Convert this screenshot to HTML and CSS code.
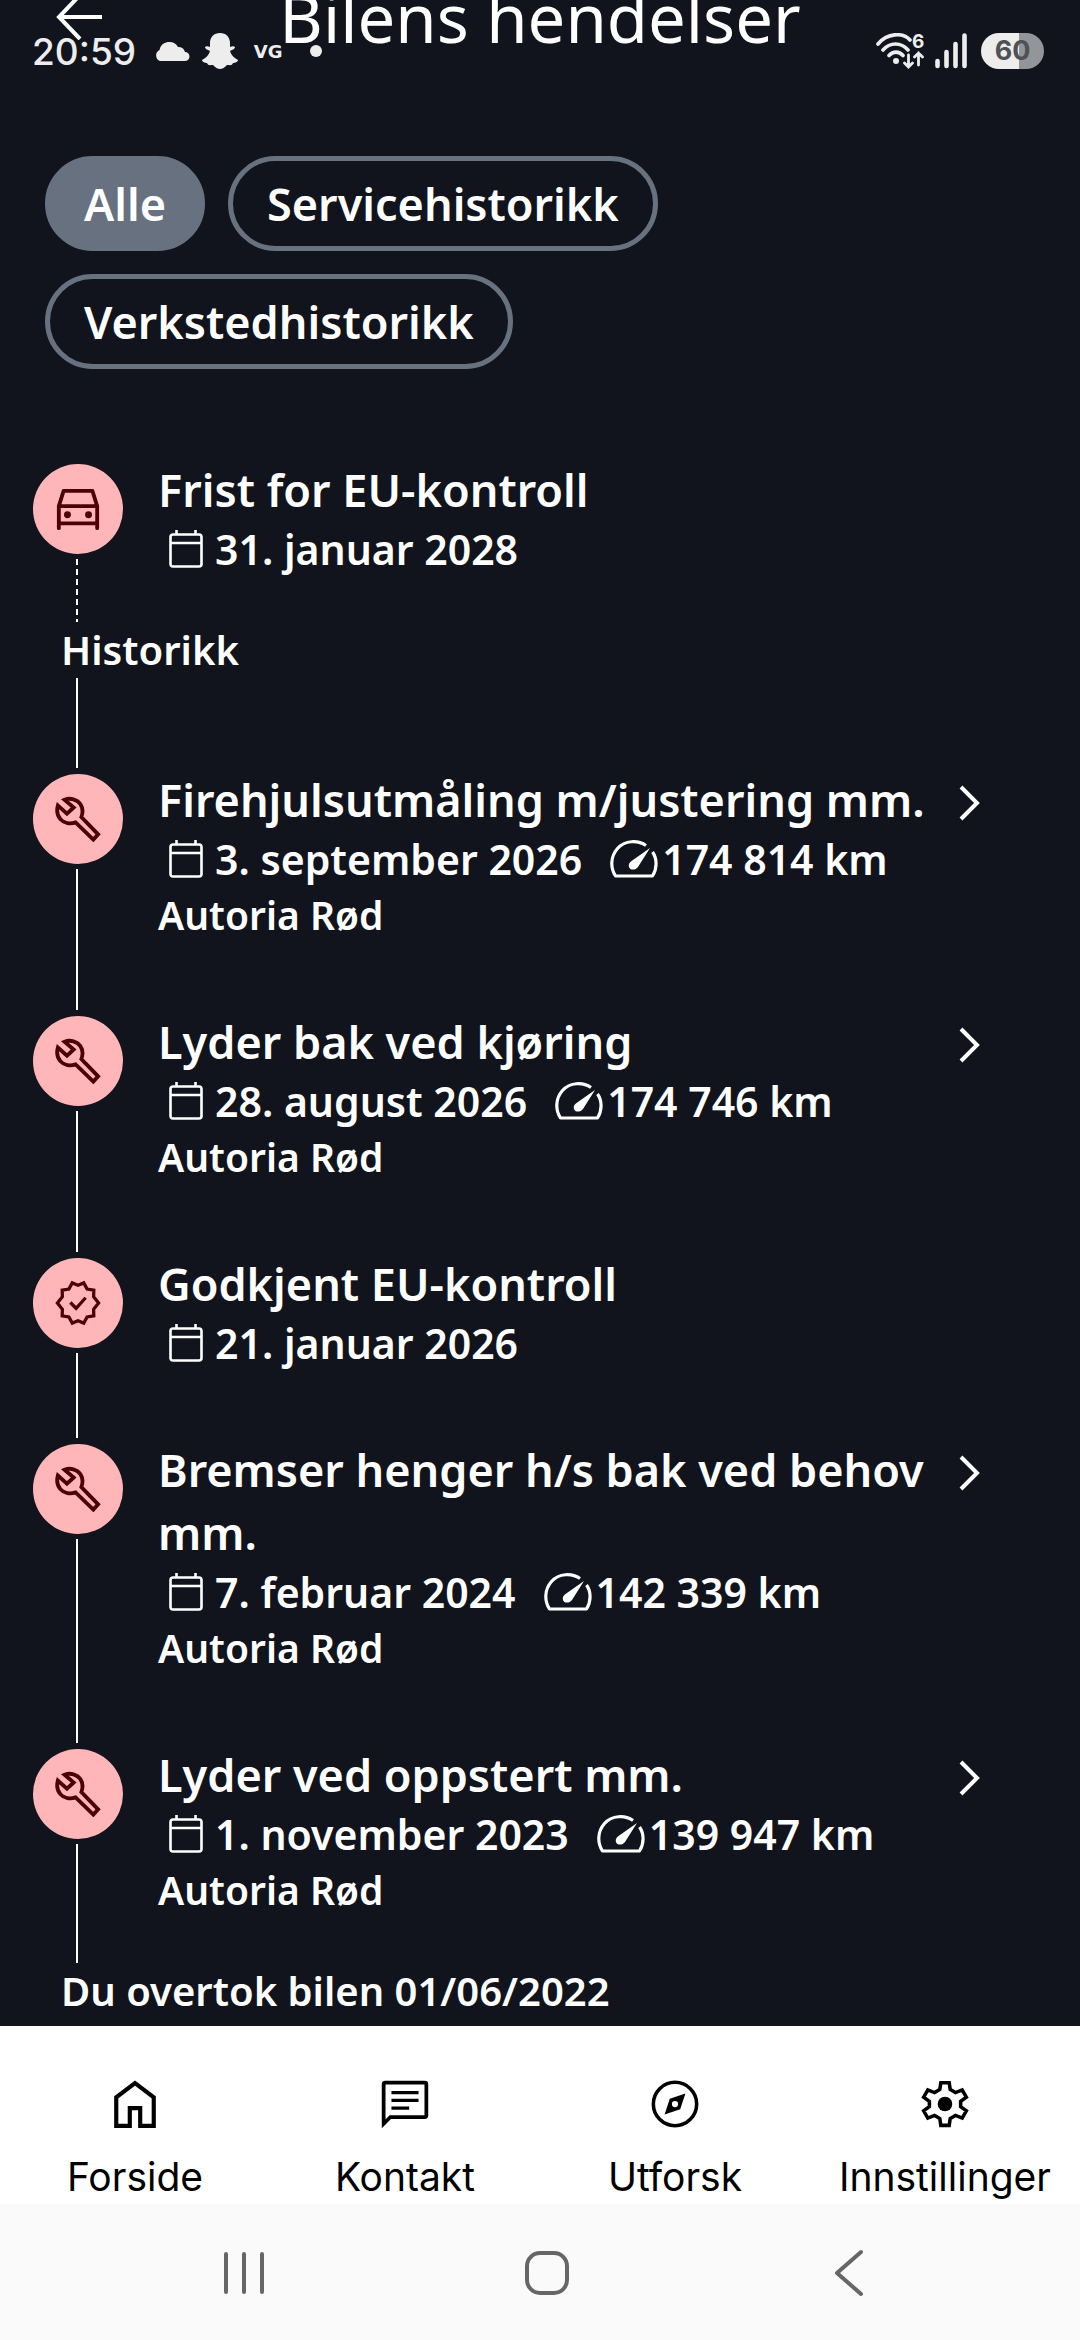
FILE: index.html
```html
<!DOCTYPE html>
<html lang="no">
<head>
  <meta charset="UTF-8">
  <meta name="viewport" content="width=device-width, initial-scale=1.0">
  <title>Bilens hendelser</title>
  <link rel="stylesheet" href="styles.css">
</head>
<body>

  <!-- shared icons -->
  <svg class="sprite" aria-hidden="true">
    <symbol id="i-car" viewBox="0 0 48 48">
      <g fill="none" stroke="currentColor" stroke-width="4" stroke-linejoin="round" stroke-linecap="round">
        <path d="M4 44V21L9 5H39L44 21V44M4 21H44M4 39H44"/>
      </g>
      <circle cx="13" cy="30" r="3.6" fill="currentColor"/>
      <circle cx="35" cy="30" r="3.6" fill="currentColor"/>
    </symbol>
    <symbol id="i-wrench" viewBox="0 0 48 48">
      <path d="M10 4C16 1.500 23 3.500 26.500 8.500C29.500 13 29 18 27.500 22L45 40L40 45.500L21.500 27.500C16 29.500 9.500 28.500 5.500 24C2 20 1.500 15.500 3 10L12.500 18.500L19.500 12Z" fill="none" stroke="currentColor" stroke-width="4"/>
    </symbol>
    <symbol id="i-badge" viewBox="0 0 48 48">
      <path d="M24 5.500L30 3L33.500 9.500L40.500 10.500L40.300 17.500L45.500 24L40.300 30.500L40.500 37.500L33.500 38.500L30 45L24 42.500L18 45L14.500 38.500L7.500 37.500L7.700 30.500L2.500 24L7.700 17.500L7.500 10.500L14.500 9.500L18 3Z" fill="none" stroke="currentColor" stroke-width="3.400"/>
      <path d="M16 23.500L22 29.500L32 18.500" fill="none" stroke="currentColor" stroke-width="3.400"/>
    </symbol>
    <symbol id="i-cal" viewBox="0 0 34 38">
      <path d="M4 4.500H30Q32.500 4.500 32.500 7V34Q32.500 36.500 30 36.500H4Q1.500 36.500 1.500 34V7Q1.500 4.500 4 4.500ZM1.500 13H32.500M7.500 0V5M26.500 0V5" fill="none" stroke="currentColor" stroke-width="2.600"/>
    </symbol>
    <symbol id="i-gauge" viewBox="0 0 48 38">
      <path d="M36 5.500C28 0 15 0 7.500 8.500C0 17 0.500 28 5.500 36H42.500C47 29 47.500 19 42.500 12" fill="none" stroke="currentColor" stroke-width="3.200" stroke-linejoin="round"/>
      <path d="M40 8L28 27C26 30 21 30.500 19.500 28C18 25.500 19 22.500 21.500 21Z" fill="currentColor"/>
    </symbol>
    <symbol id="i-next" viewBox="0 0 24 36">
      <path d="M3 2L19 18L3 34" fill="none" stroke="currentColor" stroke-width="4"/>
    </symbol>
  </svg>

  <div class="status-bar">
    <div class="status-left">
      <span class="clock">20:59</span>
      <svg class="cloud" viewBox="0 0 36 20"><path d="M6 20A6 6 0 0 1 5.500 9A10 10 0 0 1 24 6A7 7 0 0 1 31 11A4.500 4.500 0 0 1 31 20Z" fill="currentColor"/></svg>
      <svg class="snap" viewBox="0 0 36 36"><path d="M18 0C24 0 28 4 28 10V14C30 13 32 13 33 14C33 16 30 17 28 18C29 22 32 25 36 27C36 29 33 30 31 30C30 33 28 32 25 32C22 35 20 36 18 36S14 35 11 32C8 32 6 33 5 30C3 30 0 29 0 27C4 25 7 22 8 18C6 17 3 16 3 14C4 13 6 13 8 14V10C8 4 12 0 18 0Z" fill="currentColor"/></svg>
      <span class="vg">VG</span>
      <span class="dot"></span>
    </div>
    <div class="status-right">
      <svg class="wifi" viewBox="0 0 48 36">
        <g fill="none" stroke="currentColor" stroke-width="3.600" stroke-linecap="round">
          <path d="M2 11C11 0 27 -1 34 7M7 17C14 9 25 9 32 17M13 22.500C17 18 23 18 27 22.500"/>
          <path d="M32.500 22V33M28.500 30L32.500 34L36.500 30M42.500 32V20M38.500 24L42.500 20L46.500 24" stroke-width="2.800"/>
        </g>
        <circle cx="20" cy="28" r="3" fill="currentColor"/>
        <text class="wifi-gen" x="36" y="15">6</text>
      </svg>
      <svg class="signal" viewBox="0 0 32 36"><path d="M2.500 28V33M11.500 19V33M20.500 11V33M29.500 2.500V33" stroke="currentColor" stroke-width="4.600" stroke-linecap="round"/></svg>
      <span class="battery">60</span>
    </div>
  </div>

  <header class="top-bar">
    <button class="back-btn" aria-label="Tilbake">
      <svg viewBox="0 0 46 46"><path d="M46 23H3M24 1L3 23L24 45" fill="none" stroke="currentColor" stroke-width="4"/></svg>
    </button>
    <h1>Bilens hendelser</h1>
  </header>

  <main class="content">
    <div class="filters">
      <button class="chip active">Alle</button>
      <button class="chip">Servicehistorikk</button>
      <button class="chip">Verkstedhistorikk</button>
    </div>

    <section class="event upcoming">
      <div class="rail">
        <div class="bubble"><svg><use href="#i-car"/></svg></div>
        <div class="line dashed"></div>
      </div>
      <div class="info">
        <h2>Frist for EU-kontroll</h2>
        <p class="meta"><svg class="cal"><use href="#i-cal"/></svg>31. januar 2028</p>
      </div>
    </section>

    <h3 class="label">Historikk</h3>
    <div class="line spacer"></div>

    <a class="event" href="#">
      <div class="rail">
        <div class="bubble"><svg><use href="#i-wrench"/></svg></div>
        <div class="line"></div>
      </div>
      <div class="info">
        <h2>Firehjulsutmåling m/justering mm.</h2>
        <p class="meta"><svg class="cal"><use href="#i-cal"/></svg>3. september 2026 <svg class="gauge"><use href="#i-gauge"/></svg>174 814 km</p>
        <p class="shop">Autoria Rød</p>
      </div>
      <svg class="next"><use href="#i-next"/></svg>
    </a>

    <a class="event" href="#">
      <div class="rail">
        <div class="bubble"><svg><use href="#i-wrench"/></svg></div>
        <div class="line"></div>
      </div>
      <div class="info">
        <h2>Lyder bak ved kjøring</h2>
        <p class="meta"><svg class="cal"><use href="#i-cal"/></svg>28. august 2026 <svg class="gauge"><use href="#i-gauge"/></svg>174 746 km</p>
        <p class="shop">Autoria Rød</p>
      </div>
      <svg class="next"><use href="#i-next"/></svg>
    </a>

    <section class="event">
      <div class="rail">
        <div class="bubble"><svg><use href="#i-badge"/></svg></div>
        <div class="line"></div>
      </div>
      <div class="info">
        <h2>Godkjent EU-kontroll</h2>
        <p class="meta"><svg class="cal"><use href="#i-cal"/></svg>21. januar 2026</p>
      </div>
    </section>

    <a class="event" href="#">
      <div class="rail">
        <div class="bubble"><svg><use href="#i-wrench"/></svg></div>
        <div class="line"></div>
      </div>
      <div class="info">
        <h2>Bremser henger h/s bak ved behov mm.</h2>
        <p class="meta"><svg class="cal"><use href="#i-cal"/></svg>7. februar 2024 <svg class="gauge"><use href="#i-gauge"/></svg>142 339 km</p>
        <p class="shop">Autoria Rød</p>
      </div>
      <svg class="next"><use href="#i-next"/></svg>
    </a>

    <a class="event last" href="#">
      <div class="rail">
        <div class="bubble"><svg><use href="#i-wrench"/></svg></div>
        <div class="line"></div>
      </div>
      <div class="info">
        <h2>Lyder ved oppstert mm.</h2>
        <p class="meta"><svg class="cal"><use href="#i-cal"/></svg>1. november 2023 <svg class="gauge"><use href="#i-gauge"/></svg>139 947 km</p>
        <p class="shop">Autoria Rød</p>
      </div>
      <svg class="next"><use href="#i-next"/></svg>
    </a>

    <h3 class="label">Du overtok bilen 01/06/2022</h3>
  </main>

  <nav class="tabs">
    <a href="#">
      <svg viewBox="0 0 48 48"><path d="M6 45V17.500L24 4L42 17.500V45H29V28H19V45Z" fill="none" stroke="currentColor" stroke-width="4"/></svg>
      Forside
    </a>
    <a href="#">
      <svg viewBox="0 0 48 48"><path d="M3.500 43V5Q3.500 3.500 5 3.500H43Q44.500 3.500 44.500 5V35Q44.500 36.500 43 36.500H10Z" fill="none" stroke="currentColor" stroke-width="3.600"/><path d="M11 13H37M11 20.500H37M11 28H28" stroke="currentColor" stroke-width="3.200"/></svg>
      Kontakt
    </a>
    <a href="#">
      <svg viewBox="0 0 48 48"><circle cx="24" cy="24" r="20.800" fill="none" stroke="currentColor" stroke-width="3.400"/><path d="M34 14L29 29L14 34L19 19ZM24 21A3 3 0 1 0 24 27A3 3 0 1 0 24 21Z" fill="currentColor" fill-rule="evenodd"/></svg>
      Utforsk
    </a>
    <a href="#">
      <svg viewBox="0 0 48 48"><path d="M20 3.500H28L29 10L34 13L40.500 10.500L44.500 17.500L39 21.500V26.500L44.500 30.500L40.500 37.500L34 35L29 38L28 44.500H20L19 38L14 35L7.500 37.500L3.500 30.500L9 26.500V21.500L3.500 17.500L7.500 10.500L14 13L19 10Z" fill="none" stroke="currentColor" stroke-width="3.400"/><circle cx="24" cy="24" r="7" fill="currentColor"/></svg>
      Innstillinger
    </a>
  </nav>

  <div class="system-nav">
    <button aria-label="Siste apper"><svg viewBox="0 0 48 48"><path d="M5 5V43M23 5V43M41 5V43" stroke="currentColor" stroke-width="4" stroke-linecap="round"/></svg></button>
    <button aria-label="Hjem"><svg viewBox="0 0 48 48"><rect x="4" y="4" width="40" height="40" rx="13" fill="none" stroke="currentColor" stroke-width="4"/></svg></button>
    <button aria-label="Tilbake"><svg viewBox="0 0 48 48"><path d="M36 3L12 24L36 45" fill="none" stroke="currentColor" stroke-width="4" stroke-linecap="round" stroke-linejoin="round"/></svg></button>
  </div>

</body>
</html>
```
FILE: styles.css
```css
:root {
  --bg: #11141c;
  --text: #fff;
  --chip: #677180;
  --bubble: #ffb6b8;
  --bubble-icon: #4d0004;
}

* {
  box-sizing: border-box;
}

body {
  margin: 0;
  min-height: 100vh;
  display: flex;
  flex-direction: column;
  background-color: var(--bg);
  color: var(--text);
  font-family: "Noto Sans", sans-serif;
}

h1, h2, h3, p {
  margin: 0;
}

button {
  background: none;
  border: none;
  padding: 0;
  color: inherit;
  font: inherit;
  cursor: pointer;
}

a {
  color: inherit;
  text-decoration: none;
}

svg {
  display: block;
  flex: none;
}

.sprite {
  position: absolute;
  width: 0;
  height: 0;
}

.status-bar {
  position: absolute;
  top: 0;
  left: 0;
  right: 0;
  height: 102px;
  padding: 0 36px 0 32px;
  display: flex;
  justify-content: space-between;
  align-items: center;
  color: #ededed;
  font-family: Inter, sans-serif;
  z-index: 10;
}

.status-left, .status-right {
  display: flex;
  align-items: center;
}

.clock {
  font-size: 37px;
  font-weight: 500;
  margin-right: 18px;
}

.cloud {
  width: 36px;
  height: 20px;
  margin-right: 12px;
}

.snap {
  width: 36px;
  height: 36px;
  margin-right: 12px;
}

.vg {
  width: 36px;
  font-family: "DejaVu Sans", sans-serif;
  font-size: 18px;
  font-weight: bold;
  text-align: center;
}

.dot {
  width: 12px;
  height: 12px;
  margin-left: 24px;
  border-radius: 50%;
  background-color: #ededed;
}

.wifi {
  width: 48px;
  height: 36px;
  margin-right: 11px;
}

.wifi-gen {
  font-size: 19px;
  font-weight: 700;
  fill: currentColor;
}

.signal {
  width: 32px;
  height: 36px;
  margin-right: 14px;
}

.battery {
  width: 63px;
  height: 36px;
  border-radius: 18px;
  background: linear-gradient(to right, #ededed 60%, #949599 60%);
  color: #505154;
  font-size: 27px;
  font-weight: 700;
  line-height: 36px;
  text-align: center;
}

.top-bar {
  display: grid;
  grid-template-columns: 46px 1fr 46px;
  align-items: center;
  margin-top: -28px;
  padding: 0 56px;
}

.top-bar h1 {
  font-size: 67px;
  font-weight: 400;
  line-height: 90px;
  text-align: center;
}

.back-btn svg {
  width: 46px;
  height: 46px;
}

.content {
  flex: 1;
  padding: 94px 98px 0 33px;
}

.filters {
  display: flex;
  flex-wrap: wrap;
  gap: 23px;
  margin: 0 0 89px 12px;
}

.chip {
  height: 95px;
  padding: 0 34px;
  border: 5px solid var(--chip);
  border-radius: 48px;
  font-size: 45px;
  font-weight: 600;
}

.chip.active {
  background-color: var(--chip);
}

.event {
  display: flex;
  align-items: stretch;
}

.rail {
  width: 90px;
  margin-right: 35px;
  padding-top: 6px;
  display: flex;
  flex-direction: column;
  flex: none;
}

.bubble {
  width: 90px;
  height: 90px;
  margin-bottom: 5px;
  border-radius: 50%;
  background-color: var(--bubble);
  color: var(--bubble-icon);
  display: flex;
  align-items: center;
  justify-content: center;
}

.bubble svg {
  width: 46px;
  height: 46px;
}

.line {
  flex: 1;
  width: 2px;
  margin-left: 43px;
  background-color: var(--text);
}

.line.dashed {
  background: repeating-linear-gradient(to bottom, var(--text) 0 6px, transparent 6px 10px);
}

.line.spacer {
  height: 90px;
}

.info {
  flex: 1;
  padding-bottom: 67px;
  font-size: 41px;
  font-weight: 600;
  line-height: 56px;
}

.upcoming .info {
  padding-bottom: 45px;
}

.last .info {
  padding-bottom: 45px;
}

.info h2 {
  font-size: 45px;
  font-weight: 600;
  line-height: 63px;
}

.meta {
  display: flex;
  align-items: center;
}

.cal {
  width: 34px;
  height: 38px;
  margin: 0 12px 0 11px;
}

.gauge {
  width: 48px;
  height: 38px;
  margin: 0 4px 0 28px;
}

.shop {
  font-size: 39px;
}

.next {
  width: 24px;
  height: 36px;
  margin-top: 17px;
}

.label {
  margin-left: 28px;
  font-size: 40px;
  font-weight: 600;
  line-height: 56px;
}

.tabs {
  display: flex;
  height: 178px;
  padding-top: 53px;
  background-color: #fff;
  color: #000;
  font-family: Inter, sans-serif;
  font-size: 39px;
  line-height: 48px;
}

.tabs a {
  flex: 1;
  display: flex;
  flex-direction: column;
  align-items: center;
  gap: 24px;
}

.tabs svg {
  width: 50px;
  height: 50px;
}

.system-nav {
  display: flex;
  height: 136px;
  padding: 2px 80px 0 94px;
  background-color: #fafafa;
  color: #666;
}

.system-nav button {
  flex: 1;
  display: flex;
  align-items: center;
  justify-content: center;
}

.system-nav svg {
  width: 48px;
  height: 48px;
}
```
